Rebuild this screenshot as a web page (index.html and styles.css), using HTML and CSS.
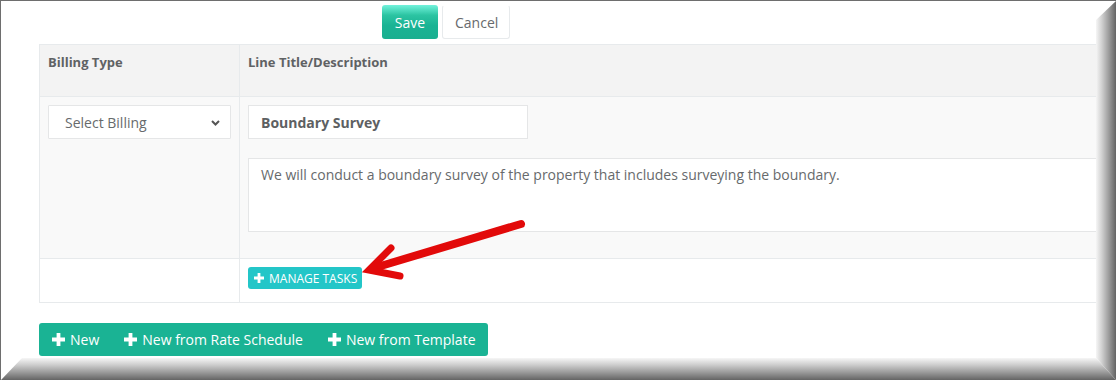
FILE: index.html
```html
<!DOCTYPE html>
<html lang="en">
<head>
    <meta charset="UTF-8">
    <title>Line Items</title>
    <link rel="stylesheet" href="styles.css">
</head>
<body>
    <div class="screen">
        <div class="page">
            <div class="form-actions">
                <button class="btn btn-save">Save</button>
                <button class="btn btn-cancel">Cancel</button>
            </div>

            <table class="line-table">
                <colgroup>
                    <col class="col-billing">
                    <col class="col-line">
                </colgroup>
                <thead>
                    <tr>
                        <th>Billing Type</th>
                        <th>Line Title/Description</th>
                    </tr>
                </thead>
                <tbody>
                    <tr class="row-edit">
                        <td>
                            <div class="select-wrap">
                                <select class="billing-select">
                                    <option>Select Billing</option>
                                </select>
                                <svg class="chevron" width="9" height="6" viewBox="0 0 9 6"><path d="M1 1l3.5 3.5L8 1" fill="none" stroke="#555" stroke-width="2"/></svg>
                            </div>
                        </td>
                        <td>
                            <input class="title-input" type="text" value="Boundary Survey">
                            <textarea class="desc-input">We will conduct a boundary survey of the property that includes surveying the boundary.</textarea>
                        </td>
                    </tr>
                    <tr class="row-tasks">
                        <td></td>
                        <td>
                            <button class="btn-tasks">
                                <svg width="10" height="10" viewBox="0 0 10 10"><path d="M3.6 0h2.8v3.6H10v2.8H6.4V10H3.6V6.4H0V3.6h3.6z" fill="#fff"/></svg>
                                Manage Tasks
                            </button>
                        </td>
                    </tr>
                </tbody>
            </table>

            <div class="add-group">
                <button class="btn-add">
                    <svg width="13" height="13" viewBox="0 0 13 13"><path d="M4.6 0h3.8v4.6H13v3.8H8.4V13H4.6V8.4H0V4.6h4.6z" fill="#fff"/></svg>
                    New
                </button>
                <button class="btn-add">
                    <svg width="13" height="13" viewBox="0 0 13 13"><path d="M4.6 0h3.8v4.6H13v3.8H8.4V13H4.6V8.4H0V4.6h4.6z" fill="#fff"/></svg>
                    New from Rate Schedule
                </button>
                <button class="btn-add">
                    <svg width="13" height="13" viewBox="0 0 13 13"><path d="M4.6 0h3.8v4.6H13v3.8H8.4V13H4.6V8.4H0V4.6h4.6z" fill="#fff"/></svg>
                    New from Template
                </button>
            </div>
        </div>
        <div class="edge-right"></div>
        <div class="edge-bottom"></div>

        <!-- callout arrow drawn over the screenshot -->
        <svg class="callout" width="1116" height="380" viewBox="0 0 1116 380">
            <path d="M521 224L374 268" stroke="#e20a0a" stroke-width="8" stroke-linecap="round" fill="none"/>
            <path d="M391 248L369 270L400 276" stroke="#e20a0a" stroke-width="7" stroke-linecap="round" stroke-linejoin="miter" fill="none"/>
        </svg>
    </div>
</body>
</html>
```

FILE: styles.css
```css
* {
    box-sizing: border-box;
}
body {
    margin: 0;
    font-family: "Open Sans", sans-serif;
    color: #676a6c;
    background: #fff;
}
.screen {
    position: relative;
    width: 1116px;
    height: 380px;
    border-top: 1px solid #6e6e6e;
    border-left: 1px solid #6e6e6e;
    display: grid;
    grid-template-columns: 1fr 20px;
    grid-template-rows: 1fr 22px;
}
.page {
    grid-column: 1;
    grid-row: 1;
    overflow: hidden;
    background: #fff;
}
.edge-right {
    grid-column: 2;
    grid-row: 1 / 3;
    background: linear-gradient(to right, #f6f6f6, #cfcfcf 30%, #a2a2a2 60%, #777 88%, #646464);
    clip-path: polygon(0 19px, 100% 0, 100% 100%, 0 calc(100% - 22px));
}
.edge-bottom {
    grid-column: 1 / 3;
    grid-row: 2;
    background: linear-gradient(to bottom, #f6f6f6, #cfcfcf 30%, #a2a2a2 60%, #777 88%, #646464);
    clip-path: polygon(21px 0, calc(100% - 20px) 0, 100% 100%, 0 100%);
}
.callout {
    position: absolute;
    top: -1px;
    left: -1px;
    pointer-events: none;
}

.form-actions {
    display: flex;
    gap: 4px;
    padding: 4px 0 0 381px;
    height: 38px;
}
.btn {
    font-family: "Open Sans", sans-serif;
    font-size: 14px;
    height: 34px;
    padding: 0 12px;
    border-radius: 3px;
    cursor: pointer;
}
.btn-save {
    width: 56px;
    color: #fff;
    border: none;
    background: linear-gradient(to bottom, #72f2dc 0%, #2cc4a2 30%, #1ab394 60%, #1aaf90 100%);
}
.btn-cancel {
    width: 68px;
    color: #676a6c;
    background: #fff;
    border: 1px solid #e7eaec;
    border-top-color: #fff;
}

.line-table {
    margin: 5px 0 0 38px;
    width: 1100px;
    table-layout: fixed;
    border-collapse: collapse;
    font-size: 13px;
}
.col-billing {
    width: 200px;
}
.line-table th,
.line-table td {
    border: 1px solid #e7eaec;
    padding: 8px;
    vertical-align: top;
    text-align: left;
}
.line-table th {
    background: #f3f3f3;
    font-weight: 700;
    height: 52px;
    line-height: 19px;
    color: #5f6264;
}
.row-edit td {
    background: #f9f9f9;
    height: 162px;
}
.row-tasks td {
    background: #fff;
    height: 44px;
}

.select-wrap {
    position: relative;
    width: 183px;
}
.billing-select {
    appearance: none;
    width: 183px;
    height: 34px;
    border: 1px solid #e5e6e7;
    border-radius: 1px;
    background: #fff;
    font-family: "Open Sans", sans-serif;
    font-size: 14px;
    color: #676a6c;
    padding: 0 0 0 16px;
}
.chevron {
    position: absolute;
    right: 11px;
    top: 15px;
}
.title-input {
    display: block;
    width: 280px;
    height: 34px;
    border: 1px solid #e5e6e7;
    background: #fff;
    padding: 0 12px;
    font-family: "Open Sans", sans-serif;
    font-size: 14px;
    font-weight: 700;
    color: #5d6062;
}
.desc-input {
    display: block;
    width: 900px;
    height: 74px;
    margin-top: 19px;
    border: 1px solid #e5e6e7;
    background: #fff;
    padding: 6px 12px;
    font-family: "Open Sans", sans-serif;
    font-size: 14px;
    line-height: 20px;
    color: #676a6c;
    resize: none;
}
.btn-tasks {
    display: inline-flex;
    align-items: center;
    gap: 5px;
    height: 22px;
    padding: 0 5px 0 6px;
    border: none;
    border-radius: 3px;
    background: #23c6c8;
    color: #fff;
    font-family: "Open Sans", sans-serif;
    font-size: 12px;
    text-transform: uppercase;
}

.add-group {
    display: inline-flex;
    margin: 20px 0 0 38px;
    background: #1ab394;
    border-radius: 3px;
}
.btn-add {
    display: inline-flex;
    align-items: center;
    gap: 5px;
    height: 33px;
    padding: 0 12px 0 13px;
    border: none;
    background: transparent;
    color: #fff;
    font-family: "Open Sans", sans-serif;
    font-size: 14px;
}
```
